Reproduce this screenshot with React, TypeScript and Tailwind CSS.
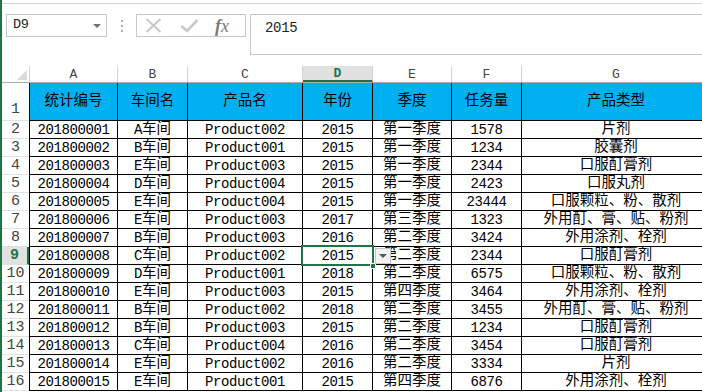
import React from "react"

const rows: string[][] = [
  ["201800001", "A车间", "Product002", "2015", "第一季度", "1578", "片剂"],
  ["201800002", "B车间", "Product001", "2015", "第一季度", "1234", "胶囊剂"],
  ["201800003", "E车间", "Product003", "2015", "第一季度", "2344", "口服酊膏剂"],
  ["201800004", "D车间", "Product004", "2015", "第一季度", "2423", "口服丸剂"],
  ["201800005", "E车间", "Product004", "2015", "第一季度", "23444", "口服颗粒、粉、散剂"],
  ["201800006", "E车间", "Product003", "2017", "第三季度", "1323", "外用酊、膏、贴、粉剂"],
  ["201800007", "B车间", "Product003", "2016", "第二季度", "3424", "外用涂剂、栓剂"],
  ["201800008", "C车间", "Product002", "2015", "第二季度", "2344", "口服酊膏剂"],
  ["201800009", "D车间", "Product001", "2018", "第二季度", "6575", "口服颗粒、粉、散剂"],
  ["201800010", "E车间", "Product003", "2015", "第四季度", "3464", "外用涂剂、栓剂"],
  ["201800011", "B车间", "Product002", "2018", "第二季度", "3455", "外用酊、膏、贴、粉剂"],
  ["201800012", "B车间", "Product003", "2015", "第二季度", "1234", "口服酊膏剂"],
  ["201800013", "C车间", "Product004", "2016", "第二季度", "3454", "口服酊膏剂"],
  ["201800014", "E车间", "Product002", "2016", "第二季度", "3334", "片剂"],
  ["201800015", "E车间", "Product001", "2015", "第四季度", "6876", "外用涂剂、栓剂"],
]

const headers = ["统计编号", "车间名", "产品名", "年份", "季度", "任务量", "产品类型"]
const letters = ["A", "B", "C", "D", "E", "F", "G"]

// first column also carries the table's left edge
const widths = [
  "w-[89px] border-l",
  "w-[70px]",
  "w-[115px]",
  "w-[70px]",
  "w-[79px]",
  "w-[70px]",
  "w-[189px]",
]

const Txt = ({ t }: { t: string }) => (
  <>
    {(t.match(/[\x00-\x7f]+|[^\x00-\x7f]+/g) || []).map((s, i) =>
      /^[\x00-\x7f]/.test(s) ? (
        <span key={i} className="text-[14px] tracking-[-0.4px]">
          {s}
        </span>
      ) : (
        <span key={i} className="text-[14.5px]">
          {s}
        </span>
      )
    )}
  </>
)

const FormulaBar = () => (
  <div className="flex items-start h-[41px]">
    <div className="ml-[4px] w-[101px] h-[23px] border border-[#c6c6c6] flex items-center justify-between pl-[6px] pr-[5px] text-[13.5px] tracking-[-0.3px] text-[#222]">
      <span>D9</span>
      <span className="w-0 h-0 border-l-[4px] border-r-[4px] border-t-[4px] border-l-transparent border-r-transparent border-t-[#707070]" />
    </div>
    <div className="ml-[14px] mt-[6px] flex flex-col gap-[3px]">
      <span className="w-[2px] h-[2px] bg-[#b0b0b0]" />
      <span className="w-[2px] h-[2px] bg-[#b0b0b0]" />
      <span className="w-[2px] h-[2px] bg-[#b0b0b0]" />
    </div>
    <div className="ml-[13px] w-[110px] h-[23px] border border-[#c6c6c6] flex items-center pl-[8px]">
      <svg width="17" height="15" viewBox="0 0 17 15" className="shrink-0">
        <path d="M1.5 1 L15.5 14 M15.5 1 L1.5 14" stroke="#c8c8c8" strokeWidth="2" fill="none" />
      </svg>
      <svg width="19" height="15" viewBox="0 0 19 15" className="ml-[18px] shrink-0">
        <path d="M1.5 8 L7 13 L17.5 2" stroke="#c8c8c8" strokeWidth="2.6" fill="none" />
      </svg>
      <span className="ml-[16px] text-[18px] leading-none italic text-[#7a7a7a] font-['Liberation_Serif',serif]">
        <span className="font-bold">f</span>x
      </span>
    </div>
    <div className="ml-[4px] flex-1 h-[41px] border-y border-l border-[#c6c6c6] pl-[14px] pt-[3px] text-[14px] tracking-[-0.3px] text-[#222]">
      2015
    </div>
  </div>
)

const ColumnHeads = () => (
  <div className="flex h-[17px] border-b border-[#ababab]">
    <div className="w-[27px] shrink-0 relative">
      <span className="absolute right-[2px] bottom-[2px] w-0 h-0 [border-bottom:10px_solid_#dadada] [border-left:10px_solid_transparent]" />
    </div>
    {letters.map((l, i) => {
      const sel = l === "D"
      return (
        <div
          key={l}
          className={`${widths[i]} shrink-0 border-r border-[#d4d4d4] flex items-center justify-center text-[13px] leading-none ${
            sel ? "bg-[#e1e1e1] text-[#217346] font-bold border-b-2 border-b-[#217346]" : "text-[#444]"
          }`}
        >
          {l}
        </div>
      )
    })}
  </div>
)

const RowHead = ({ n, sel, tall }: { n: number; sel?: boolean; tall?: boolean }) => (
  <div
    className={`w-[27px] shrink-0 flex justify-center border-b border-[#e1e1e1] text-[15px] leading-none ${
      tall ? "items-end pb-[3px]" : "items-center"
    } ${sel ? "bg-[#e1e1e1] text-[#217346] font-bold border-r-2 border-r-[#217346]" : "text-[#444]"}`}
  >
    {n}
  </div>
)

export default function App() {
  return (
    <div className="w-[702px] h-[392px] overflow-hidden bg-white border-l-2 border-[#217346] font-['Liberation_Mono','Noto_Sans_CJK_SC',monospace] text-black">
      <div className="h-[4px] border-b border-[#d4d4d4]" />
      <div className="pt-[10px]">
        <FormulaBar />
      </div>
      <div className="mt-[11px] w-[720px]">
        <ColumnHeads />
        <div className="flex h-[38px]">
          <RowHead n={1} tall />
          {headers.map((h, i) => (
            <div
              key={h}
              className={`${widths[i]} shrink-0 bg-[#00b0f0] border-r border-b border-black flex items-center justify-center text-[14.5px]`}
            >
              {h}
            </div>
          ))}
        </div>
        {rows.map((r, ri) => {
          const n = ri + 2
          const selRow = n === 9
          return (
            <div key={n} className="flex h-[18px]">
              <RowHead n={n} sel={selRow} />
              {r.map((c, ci) => (
                <div
                  key={ci}
                  className={`${widths[ci]} shrink-0 border-r border-b border-black flex items-center justify-center leading-none whitespace-nowrap ${
                    selRow && ci === 3 ? "relative" : ""
                  }`}
                >
                  <Txt t={c} />
                  {selRow && ci === 3 && (
                    <>
                      <div className="absolute -left-[2px] -top-[2px] w-[73px] h-[21px] border-2 border-[#217346] pointer-events-none" />
                      <div className="absolute left-[67px] top-[16px] w-[6px] h-[6px] bg-[#217346] border border-white" />
                      <div className="absolute left-[72px] top-[1px] w-[16px] h-[16px] bg-[#f3f3f3] border border-[#c6c6c6] flex items-center justify-center z-10">
                        <span className="w-0 h-0 border-l-[4px] border-r-[4px] border-t-[4px] border-l-transparent border-r-transparent border-t-[#555]" />
                      </div>
                    </>
                  )}
                </div>
              ))}
            </div>
          )
        })}
      </div>
    </div>
  )
}
